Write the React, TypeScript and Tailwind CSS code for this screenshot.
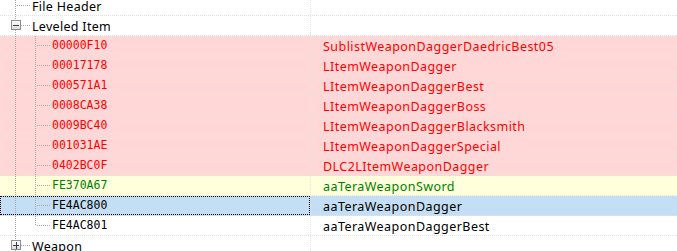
import React from 'react';

type Kind = 'root' | 'open' | 'closed' | 'child' | 'lastChild';

interface Row {
  kind: Kind;
  label: string;
  name?: string;
  tone?: 'red' | 'green' | 'plain';
  selected?: boolean;
}

const rows: Row[] = [
  { kind: 'root', label: 'File Header' },
  { kind: 'open', label: 'Leveled Item' },
  { kind: 'child', label: '00000F10', name: 'SublistWeaponDaggerDaedricBest05', tone: 'red' },
  { kind: 'child', label: '00017178', name: 'LItemWeaponDagger', tone: 'red' },
  { kind: 'child', label: '000571A1', name: 'LItemWeaponDaggerBest', tone: 'red' },
  { kind: 'child', label: '0008CA38', name: 'LItemWeaponDaggerBoss', tone: 'red' },
  { kind: 'child', label: '0009BC40', name: 'LItemWeaponDaggerBlacksmith', tone: 'red' },
  { kind: 'child', label: '001031AE', name: 'LItemWeaponDaggerSpecial', tone: 'red' },
  { kind: 'child', label: '0402BC0F', name: 'DLC2LItemWeaponDagger', tone: 'red' },
  { kind: 'child', label: 'FE370A67', name: 'aaTeraWeaponSword', tone: 'green' },
  { kind: 'child', label: 'FE4AC800', name: 'aaTeraWeaponDagger', tone: 'plain', selected: true },
  { kind: 'lastChild', label: 'FE4AC801', name: 'aaTeraWeaponDaggerBest', tone: 'plain' },
  { kind: 'closed', label: 'Weapon' },
];

const dot = { stroke: '#a8a8a8', strokeWidth: 1, strokeDasharray: '1 1', shapeRendering: 'crispEdges' as const };

const Box: React.FC<{ plus?: boolean }> = ({ plus }) => (
  <g>
    <defs>
      <linearGradient id="bx" x1="0" y1="0" x2="0" y2="1">
        <stop offset="0" stopColor="#ffffff" />
        <stop offset="1" stopColor="#dcdcdc" />
      </linearGradient>
    </defs>
    <rect x="11.5" y="4.5" width="9" height="9" fill="url(#bx)" stroke="#8e8f8f" shapeRendering="crispEdges" />
    <line x1="13" y1="9.5" x2="19" y2="9.5" stroke="#2e3d5a" strokeWidth="1" shapeRendering="crispEdges" />
    {plus && <line x1="16" y1="6" x2="16" y2="13" stroke="#2e3d5a" strokeWidth="1" shapeRendering="crispEdges" />}
  </g>
);

const TreeLines: React.FC<{ kind: Kind }> = ({ kind }) => {
  const isChild = kind === 'child' || kind === 'lastChild';
  return (
    <svg width="52" height="19" className="shrink-0 block overflow-visible">
      {kind === 'open' || kind === 'closed' ? (
        <>
          <line x1="15.5" y1="0" x2="15.5" y2="4" {...dot} />
          <line x1="15.5" y1="14" x2="15.5" y2="20" {...dot} />
          <line x1="21" y1="9.5" x2="31" y2="9.5" {...dot} />
          <Box plus={kind === 'closed'} />
        </>
      ) : (
        <line x1="15.5" y1="0" x2="15.5" y2="20" {...dot} />
      )}
      {kind === 'root' && <line x1="17" y1="9.5" x2="31" y2="9.5" {...dot} />}
      {isChild && (
        <>
          <line x1="35.5" y1="0" x2="35.5" y2={kind === 'lastChild' ? 10 : 20} {...dot} />
          <line x1="37" y1="9.5" x2="51" y2="9.5" {...dot} />
        </>
      )}
    </svg>
  );
};

const toneBg = (r: Row) => {
  if (r.selected) return 'bg-[#c4dff5]';
  if (r.tone === 'red') return 'bg-[#ffd7d7]';
  if (r.tone === 'green') return 'bg-[#ffffdc]';
  return 'bg-white';
};

const toneText = (r: Row) => {
  if (r.tone === 'red') return 'text-[#ff0000]';
  if (r.tone === 'green') return 'text-[#008000]';
  return 'text-black';
};

export default function App() {
  return (
    <div className="w-[677px] h-[251px] overflow-hidden bg-white">
      <div className="-mt-[4px]">
        {rows.map((r, i) => {
          const isChild = r.kind === 'child' || r.kind === 'lastChild';
          return (
            <div
              key={i}
              className={`flex h-[19px] border-b border-dotted border-[#e2e2e2] box-content ${isChild ? toneBg(r) : 'bg-white'}`}
            >
              <div
                className={`relative flex items-center w-[310px] shrink-0 ${
                  r.selected ? 'outline outline-1 outline-dotted outline-black -outline-offset-1' : ''
                }`}
              >
                <div className={isChild ? 'w-[52px] shrink-0' : 'w-[32px] shrink-0'}>
                  <TreeLines kind={r.kind} />
                </div>
                {isChild ? (
                  <span
                    className={`pt-[1px] text-[11.5px] leading-none ${toneText(r)}`}
                    style={{ fontFamily: '"DejaVu Sans Mono", monospace' }}
                  >
                    {r.label}
                  </span>
                ) : (
                  <span
                    className="pt-[3px] text-[12.5px] leading-none tracking-[0.3px] text-black"
                    style={{ fontFamily: '"Noto Sans", sans-serif' }}
                  >
                    {r.label}
                  </span>
                )}
              </div>
              <div className="flex items-center flex-1 border-l border-dotted border-[#e2e2e2] pl-[12px]">
                {r.name && (
                  <span
                    className={`pt-[3px] text-[12.5px] leading-none tracking-[0.45px] ${toneText(r)}`}
                    style={{ fontFamily: '"Noto Sans", sans-serif' }}
                  >
                    {r.name}
                  </span>
                )}
              </div>
            </div>
          );
        })}
      </div>
    </div>
  );
}
